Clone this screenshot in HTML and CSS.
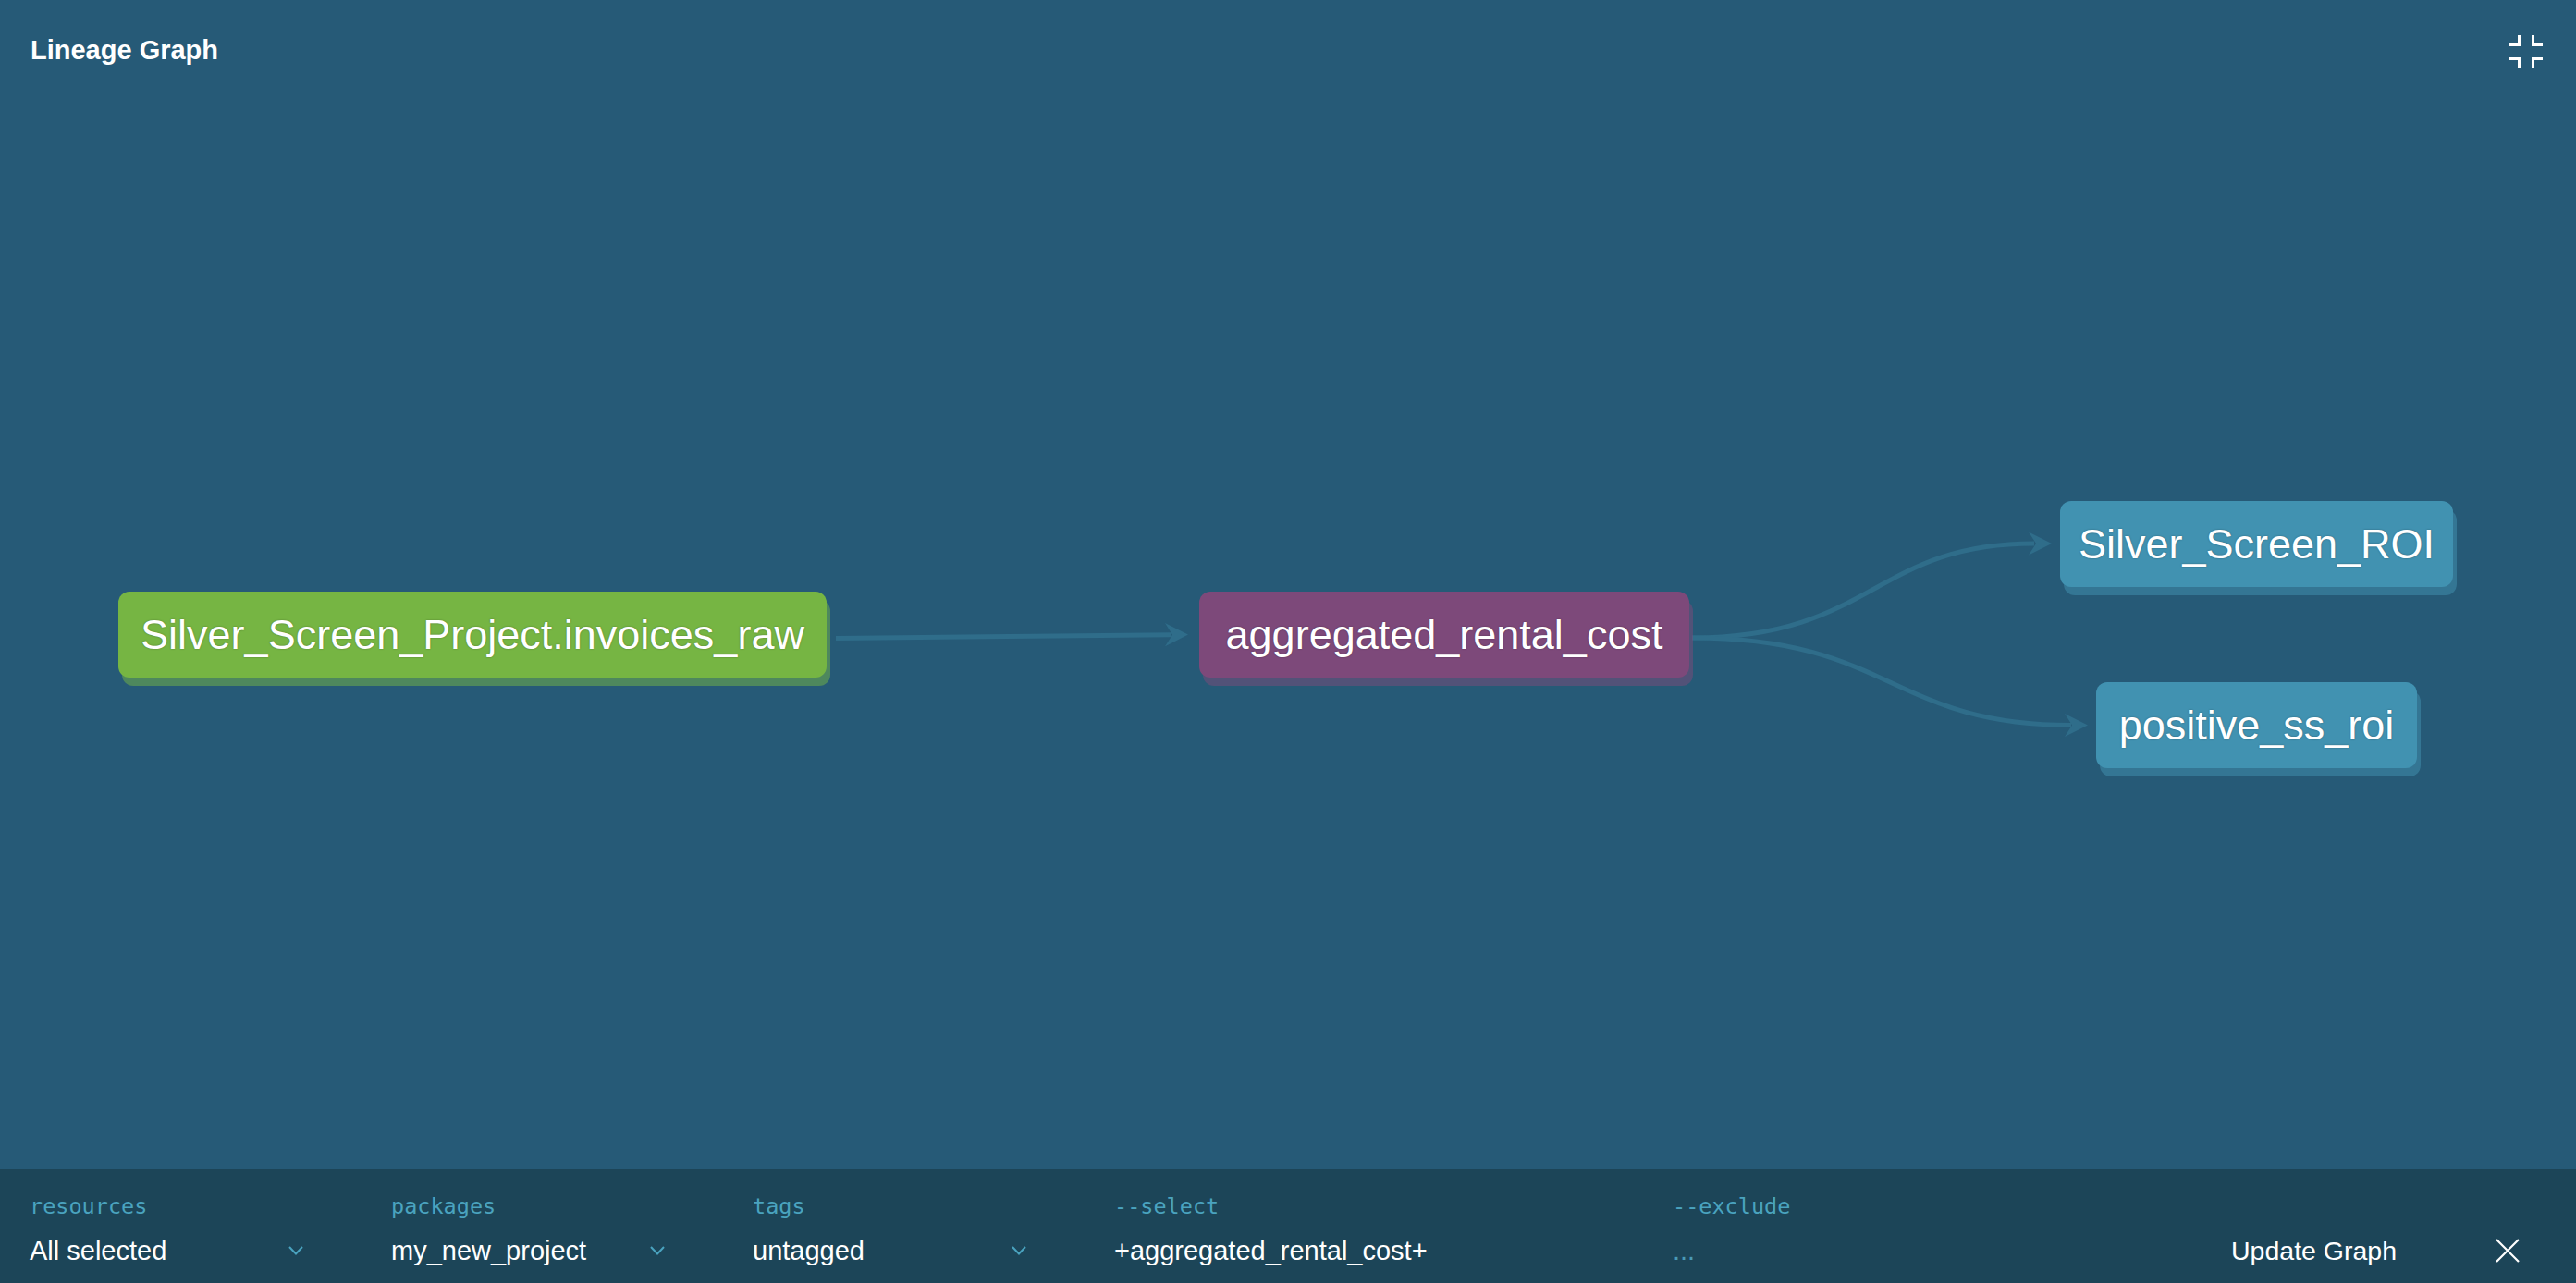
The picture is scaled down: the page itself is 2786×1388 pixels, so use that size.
FILE: index.html
```html
<!DOCTYPE html>
<html lang="en">
<head>
<meta charset="utf-8">
<title>Lineage Graph</title>
<link rel="stylesheet" href="styles.css">
</head>
<body>
<div class="app">
  <header class="header">
    <h1 class="title">Lineage Graph</h1>
    <button class="icon-btn collapse" aria-label="Collapse">
      <svg width="36" height="36" viewBox="0 0 36 36" fill="none" stroke="#ffffff" stroke-width="3">
        <path d="M10.5 0 V10.5 H0"/>
        <path d="M25.5 0 V10.5 H36"/>
        <path d="M0 25.5 H10.5 V36"/>
        <path d="M36 25.5 H25.5 V36"/>
      </svg>
    </button>
  </header>

  <main class="canvas">
    <svg class="edges" width="2786" height="1165" viewBox="0 0 2786 1165">
      <g fill="none" stroke="#2f6d8a" stroke-width="5">
        <path d="M904 590.5 L1266 586.8"/>
        <path d="M1830 590 C2026 590, 2026 488, 2200 488"/>
        <path d="M1830 590 C2045 590, 2045 684.5, 2240 684.5"/>
      </g>
      <g fill="#2f6d8a">
        <polygon points="1285,586.6 1260,574 1268,586.7 1260,599.2"/>
        <polygon points="2219,488 2194,475.5 2202,488 2194,500.5"/>
        <polygon points="2258,684.5 2233,672 2241,684.5 2233,697"/>
      </g>
    </svg>

    <div class="node node-source" style="left:128px; top:540px; width:766px;">Silver_Screen_Project.invoices_raw</div>
    <div class="node node-model" style="left:1297px; top:540px; width:530px;">aggregated_rental_cost</div>
    <div class="node node-exposure" style="left:2228px; top:442px; width:425px;">Silver_Screen_ROI</div>
    <div class="node node-exposure" style="left:2267px; top:638px; width:347px;">positive_ss_roi</div>
  </main>

  <footer class="bar">
    <div class="field">
      <div class="label">resources</div>
      <div class="select"><span class="value">All selected</span>
        <svg class="chev" width="16" height="10" viewBox="0 0 16 10" fill="none" stroke="#4aa3bf" stroke-width="2"><path d="M1 1 L8 8.5 L15 1"/></svg>
      </div>
    </div>
    <div class="field">
      <div class="label">packages</div>
      <div class="select"><span class="value">my_new_project</span>
        <svg class="chev" width="16" height="10" viewBox="0 0 16 10" fill="none" stroke="#4aa3bf" stroke-width="2"><path d="M1 1 L8 8.5 L15 1"/></svg>
      </div>
    </div>
    <div class="field">
      <div class="label">tags</div>
      <div class="select"><span class="value">untagged</span>
        <svg class="chev" width="16" height="10" viewBox="0 0 16 10" fill="none" stroke="#4aa3bf" stroke-width="2"><path d="M1 1 L8 8.5 L15 1"/></svg>
      </div>
    </div>
    <div class="field">
      <div class="label">--select</div>
      <div class="input"><span class="value">+aggregated_rental_cost+</span></div>
    </div>
    <div class="field">
      <div class="label">--exclude</div>
      <div class="input"><span class="value placeholder">...</span></div>
    </div>
    <button class="update">Update Graph</button>
    <button class="icon-btn close" aria-label="Close">
      <svg width="26" height="26" viewBox="0 0 26 26" fill="none" stroke="#ffffff" stroke-width="2.2">
        <path d="M1 1 L25 25 M25 1 L1 25"/>
      </svg>
    </button>
  </footer>
</div>
</body>
</html>
```

FILE: styles.css
```css
* { box-sizing: border-box; }

html, body {
  margin: 0;
  padding: 0;
  width: 2786px;
  height: 1388px;
  overflow: hidden;
  background: #265a77;
  font-family: "Liberation Sans", Arial, sans-serif;
  color: #ffffff;
}

.app {
  display: flex;
  flex-direction: column;
  height: 1388px;
}

.header {
  height: 100px;
  flex: 0 0 100px;
  display: flex;
  justify-content: space-between;
  align-items: flex-start;
  padding: 0 36px 0 33px;
}

.title {
  margin: 40px 0 0 0;
  font-size: 29px;
  line-height: 29px;
  font-weight: 700;
  color: #ffffff;
}

.icon-btn {
  background: none;
  border: 0;
  padding: 0;
  margin: 0;
  display: block;
  cursor: pointer;
}

.icon-btn svg { display: block; }

.collapse { margin-top: 38px; }

.canvas {
  position: relative;
  flex: 1 1 auto;
  overflow: hidden;
}

.edges {
  position: absolute;
  left: 0;
  top: 0;
}

.node {
  position: absolute;
  height: 93px;
  border-radius: 12px;
  display: flex;
  align-items: center;
  justify-content: center;
  font-size: 45px;
  line-height: 1;
  color: #ffffff;
  white-space: nowrap;
  text-shadow: 0 0 2px rgba(0, 0, 0, 0.35);
}

.node-source {
  background: #76b543;
  box-shadow: 4px 9px 0 rgba(118, 181, 67, 0.5);
}

.node-model {
  background: #7d497a;
  box-shadow: 4px 9px 0 rgba(125, 73, 122, 0.5);
}

.node-exposure {
  background: #4192b1;
  box-shadow: 4px 9px 0 rgba(65, 146, 177, 0.5);
}

.bar {
  flex: 0 0 123px;
  height: 123px;
  background: #1c4558;
  display: grid;
  grid-template-columns: 391px 391px 391px 604px 604px 286px 26px;
  grid-template-rows: 30px 34px;
  row-gap: 16px;
  padding: 25px 0 0 32px;
}

.field {
  grid-row: 1 / span 2;
  display: grid;
  grid-template-rows: 30px 34px;
  row-gap: 16px;
}

.label {
  font-family: "DejaVu Sans Mono", "Liberation Mono", monospace;
  font-size: 23.5px;
  line-height: 30px;
  color: #4aa3bf;
}

.select {
  width: 296px;
  display: flex;
  align-items: center;
  justify-content: space-between;
}

.chev { display: block; }

.input {
  display: flex;
  align-items: center;
}

.value {
  font-size: 29px;
  line-height: 34px;
  color: #ffffff;
  white-space: nowrap;
}

.value.placeholder {
  color: #4a9ab6;
}

.update {
  grid-row: 2;
  grid-column: 6;
  justify-self: start;
  background: none;
  border: 0;
  padding: 0;
  margin: 0;
  font-family: "Liberation Sans", Arial, sans-serif;
  font-size: 28.5px;
  line-height: 34px;
  color: #ffffff;
  cursor: pointer;
}

.close {
  grid-row: 2;
  grid-column: 7;
  align-self: center;
}
```
